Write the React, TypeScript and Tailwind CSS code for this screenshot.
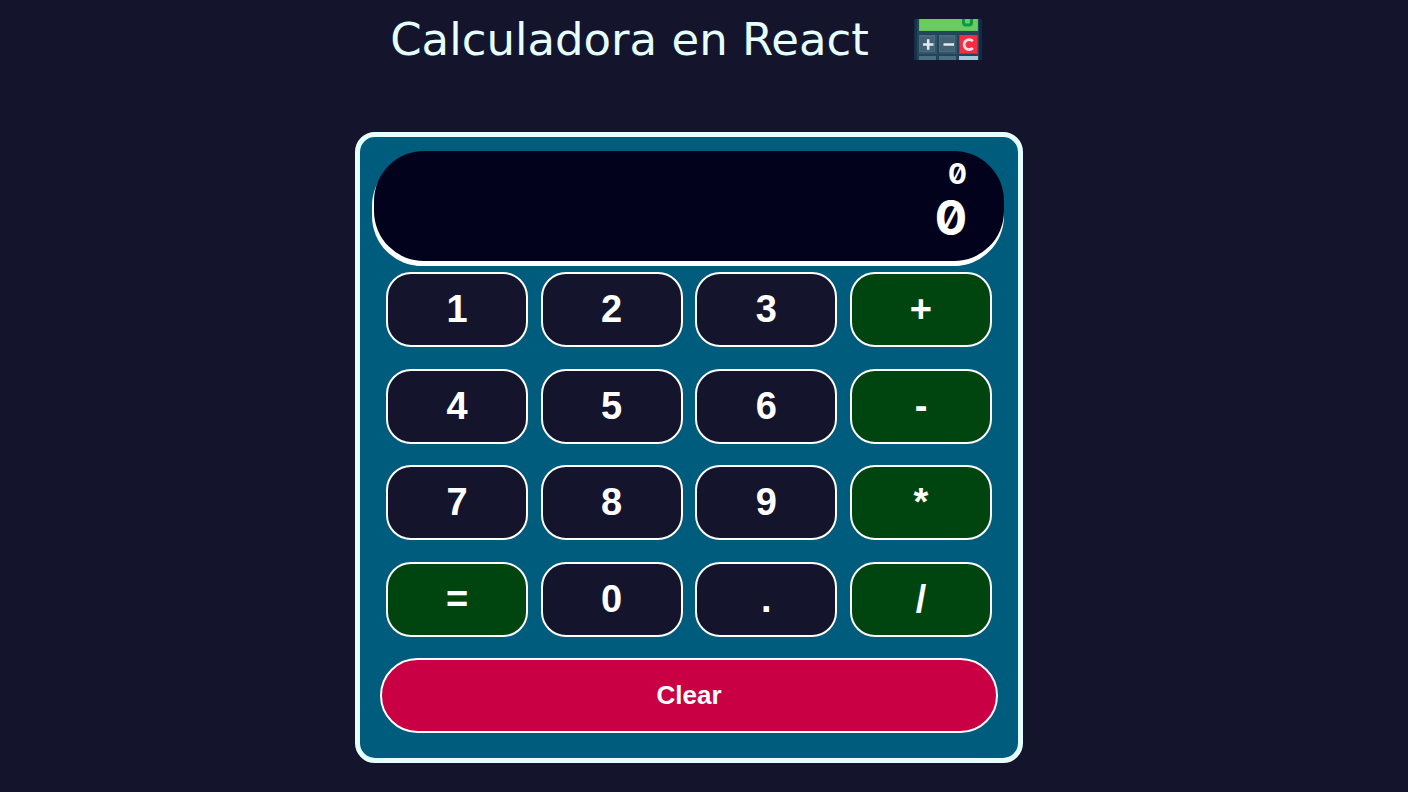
import { useState } from "react";
import clsx from "clsx";

const rows = [
  ["1", "2", "3", "+"],
  ["4", "5", "6", "-"],
  ["7", "8", "9", "*"],
  ["=", "0", ".", "/"],
];

const operators = ["+", "-", "*", "/"];

function apply(a: number, operator: string, b: number) {
  if (operator === "+") return a + b;
  if (operator === "-") return a - b;
  if (operator === "*") return a * b;
  return a / b;
}

function Logo() {
  return (
    <svg
      viewBox="0 0 68 41"
      className="h-[41px] w-[68px] shrink-0"
      role="img"
      aria-label="Calculadora"
    >
      <rect width="68" height="41" fill="#142f44" />
      <rect x="1" width="2" height="41" fill="#1a3447" />
      <rect x="3" width="62" height="41" fill="#21455a" />
      <rect x="65" width="3" height="41" fill="#0b2d45" />
      <rect x="5" width="59" height="12" fill="#5fc45a" />
      <rect x="6" width="57" height="11" fill="#6acb5e" />
      <path d="M49.500 0v3.500q0 2.500 2.500 2.500h3q2.500 0 2.500-2.500V0" fill="none" stroke="#059b43" strokeWidth="3" />
      <g>
        <rect x="5" y="16" width="18" height="19" fill="#345468" />
        <rect x="5" y="16" width="16" height="17" fill="#49697c" />
        <rect x="6" y="18" width="14" height="14" fill="#426175" />
        <rect x="25" y="16" width="18" height="19" fill="#345468" />
        <rect x="25" y="16" width="16" height="17" fill="#49697c" />
        <rect x="26" y="18" width="14" height="14" fill="#426175" />
        <rect x="45" y="16" width="19" height="19" fill="#dc1e35" />
        <rect x="46" y="16" width="17" height="18" fill="#fa2b3e" />
      </g>
      <path d="M9 25.500h10.500M14.200 20.300v10.500M29.500 25.500h10.500" stroke="#e3e9ef" strokeWidth="2.600" />
      <path d="M58.800 22.200a5 5 0 1 0 0 6.800" fill="none" stroke="#f3dfe8" strokeWidth="2.800" />
      <rect x="5" y="37" width="17" height="4" fill="#4d6d80" />
      <rect x="25" y="37" width="17" height="4" fill="#4d6d80" />
      <rect x="45" y="37" width="19" height="4" fill="#a8c5de" />
    </svg>
  );
}

export default function App() {
  const [stored, setStored] = useState("0");
  const [current, setCurrent] = useState("0");
  const [operator, setOperator] = useState("");

  function press(key: string) {
    if (key === "=" || operators.includes(key)) {
      const result = operator
        ? String(apply(Number(stored), operator, Number(current)))
        : current;
      setStored(result);
      setCurrent(key === "=" ? result : "0");
      setOperator(key === "=" ? "" : key);
    } else if (key === ".") {
      if (!current.includes(".")) setCurrent(current + ".");
    } else {
      setCurrent(current === "0" ? key : current + key);
    }
  }

  function clear() {
    setStored("0");
    setCurrent("0");
    setOperator("");
  }

  return (
    <div className="flex min-h-screen flex-col items-center bg-[#14142d] pr-[30px] pb-7 font-['Liberation_Sans',sans-serif]">
      <header className="flex h-[132px] items-start justify-center gap-[45px] pt-[19px] pr-[6px]">
        <h1 className="font-['DejaVu_Sans',sans-serif] text-[45px] leading-[41px] font-normal whitespace-nowrap text-[#e6ffff]">
          Calculadora en React
        </h1>
        <Logo />
      </header>
      <main className="w-full max-w-[668px] rounded-[20px] border-[5px] border-[#e6ffff] bg-[#005c7c] pt-[14px] pb-[25px]">
        <output className="mx-[14px] flex h-[110px] flex-col items-end rounded-[50px] bg-[#02021c] pt-[9px] pr-[37px] font-['Inter',sans-serif] font-bold text-white slashed-zero shadow-[0_5px_0_#ffffff,-2px_5px_0_#ffffff]">
          <span className="text-[28px] leading-7">{stored + operator}</span>
          <span className="text-[48px] leading-[60px]">{current}</span>
        </output>
        <div className="mx-5 mt-[11px] flex h-[461px] flex-col justify-between">
          {rows.map((row) => (
            <div key={row[0]} className="flex justify-between px-[6px]">
              {row.map((key) => (
                <button
                  key={key}
                  type="button"
                  onClick={() => press(key)}
                  className={clsx(
                    "h-[75px] w-[142px] cursor-pointer rounded-[25px] border-2 border-white text-[38px] font-bold text-white",
                    key === "=" || operators.includes(key) ? "bg-[#00450f]" : "bg-[#14142d]",
                  )}
                >
                  {key}
                </button>
              ))}
            </div>
          ))}
          <button
            type="button"
            onClick={clear}
            className="h-[75px] w-full cursor-pointer rounded-full border-2 border-white bg-[#c90044] text-[26px] font-bold text-white"
          >
            Clear
          </button>
        </div>
      </main>
    </div>
  );
}
